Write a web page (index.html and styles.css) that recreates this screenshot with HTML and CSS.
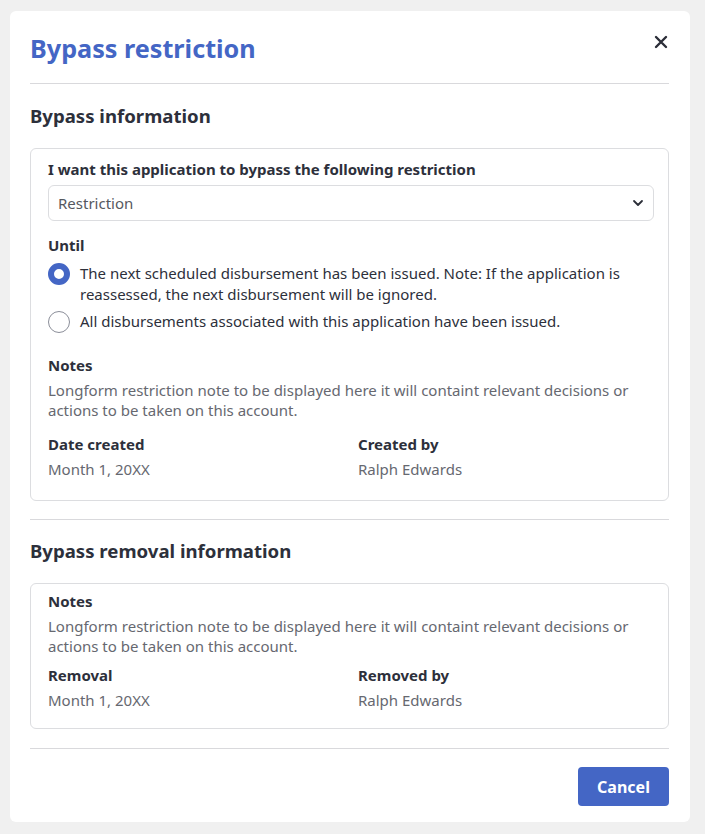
FILE: index.html
```html
<!DOCTYPE html>
<html lang="en">
<head>
<meta charset="utf-8">
<link rel="stylesheet" href="styles.css">
<title>Bypass restriction</title>
</head>
<body>
<div class="modal">
  <div class="modal-header">
    <h1 class="title">Bypass restriction</h1>
    <button class="close" aria-label="Close">
      <svg width="14" height="14" viewBox="0 0 14 14"><path d="M2 2 L12 12 M12 2 L2 12" stroke="#2b2e38" stroke-width="2.4" stroke-linecap="round"/></svg>
    </button>
  </div>
  <hr class="divider">
  <h2 class="section-title">Bypass information</h2>
  <div class="box box-info">
    <div class="label">I want this application to bypass the following restriction</div>
    <div class="select">
      <span>Restriction</span>
      <svg width="12" height="8" viewBox="0 0 12 8"><path d="M2 2 L6 6 L10 2" fill="none" stroke="#2b2e38" stroke-width="1.8" stroke-linecap="round" stroke-linejoin="round"/></svg>
    </div>
    <div class="label until">Until</div>
    <div class="radio-row first">
      <span class="radio checked"></span>
      <span class="radio-text">The next scheduled disbursement has been issued. Note: If the application is reassessed, the next disbursement will be ignored.</span>
    </div>
    <div class="radio-row second">
      <span class="radio"></span>
      <span class="radio-text">All disbursements associated with this application have been issued.</span>
    </div>
    <div class="label notes">Notes</div>
    <div class="value">Longform restriction note to be displayed here it will containt relevant decisions or actions to be taken on this account.</div>
    <div class="grid">
      <div>
        <div class="label">Date created</div>
        <div class="value">Month 1, 20XX</div>
      </div>
      <div>
        <div class="label">Created by</div>
        <div class="value">Ralph Edwards</div>
      </div>
    </div>
  </div>
  <hr class="divider divider-mid">
  <h2 class="section-title section-title-2">Bypass removal information</h2>
  <div class="box box-removal">
    <div class="label">Notes</div>
    <div class="value">Longform restriction note to be displayed here it will containt relevant decisions or actions to be taken on this account.</div>
    <div class="grid grid-tight">
      <div>
        <div class="label">Removal</div>
        <div class="value">Month 1, 20XX</div>
      </div>
      <div>
        <div class="label">Removed by</div>
        <div class="value">Ralph Edwards</div>
      </div>
    </div>
  </div>
  <hr class="divider divider-end">
  <div class="footer">
    <button class="btn">Cancel</button>
  </div>
</div>
</body>
</html>
```

FILE: styles.css
```css
* { box-sizing: border-box; }
html, body { margin: 0; padding: 0; }
body {
  background: #f0f0f0;
  font-family: "Noto Sans", "Open Sans", sans-serif;
  color: #2d303b;
  padding: 11px 15px 12px 10px;
}
.modal {
  background: #fff;
  border-radius: 6px;
  padding: 21px 21px 16px 20px;
  width: 680px;
}
.modal-header {
  display: flex;
  justify-content: space-between;
  align-items: flex-start;
}
.title {
  margin: 0;
  font-size: 25.2px;
  line-height: 32px;
  font-weight: 700;
  color: #4466c5;
}
.close {
  border: 0;
  background: none;
  padding: 0;
  margin: 3px 1px 0 0;
  width: 14px;
  height: 14px;
  display: flex;
  cursor: pointer;
}
.divider {
  border: 0;
  border-top: 1px solid #d9d9dc;
  margin: 19px 0 0 0;
  height: 0;
}
.divider-mid { margin-top: 18px; }
.divider-end { margin-top: 19px; }
.section-title {
  margin: 20px 0 0 0;
  font-size: 18.6px;
  line-height: 24px;
  font-weight: 700;
  color: #2d303b;
}
.section-title-2 { margin-top: 19px; }
.box {
  border: 1px solid #dcdde0;
  border-radius: 6px;
  margin-top: 20px;
  padding: 10px 14px 21px 17px;
}
.box-removal { padding: 7px 14px 18px 17px; }
.label {
  font-size: 15px;
  line-height: 20px;
  font-weight: 700;
  color: #2d303b;
}
.value {
  font-size: 15px;
  line-height: 20px;
  color: #666870;
  margin-top: 5px;
}
.select {
  margin-top: 6px;
  height: 36px;
  border: 1px solid #dcdde0;
  border-radius: 6px;
  display: flex;
  align-items: center;
  justify-content: space-between;
  padding: 0 9px 0 9px;
  font-size: 15px;
  color: #55585f;
}
.until { margin-top: 14px; }
.radio-row {
  display: flex;
  align-items: flex-start;
  gap: 10px;
}
.radio-row.first { margin-top: 8px; }
.radio-row.second { margin-top: 6px; }
.radio {
  flex: 0 0 22px;
  width: 22px;
  height: 22px;
  border-radius: 50%;
  border: 1.5px solid #8b8e99;
  background: #fff;
}
.radio.checked { border: 6px solid #4466c5; }
.radio-text {
  font-size: 15px;
  line-height: 21px;
  color: #2d303b;
}
.notes { margin-top: 22px; }
.grid {
  display: grid;
  grid-template-columns: 310px 1fr;
  margin-top: 14px;
}
.grid-tight { margin-top: 9px; }
.footer {
  display: flex;
  justify-content: flex-end;
  margin-top: 18px;
}
.btn {
  background: #4466c5;
  color: #fff;
  border: 0;
  border-radius: 4px;
  height: 39px;
  width: 91px;
  font-family: "Noto Sans", sans-serif;
  font-size: 16px;
  font-weight: 700;
  cursor: pointer;
}
```
